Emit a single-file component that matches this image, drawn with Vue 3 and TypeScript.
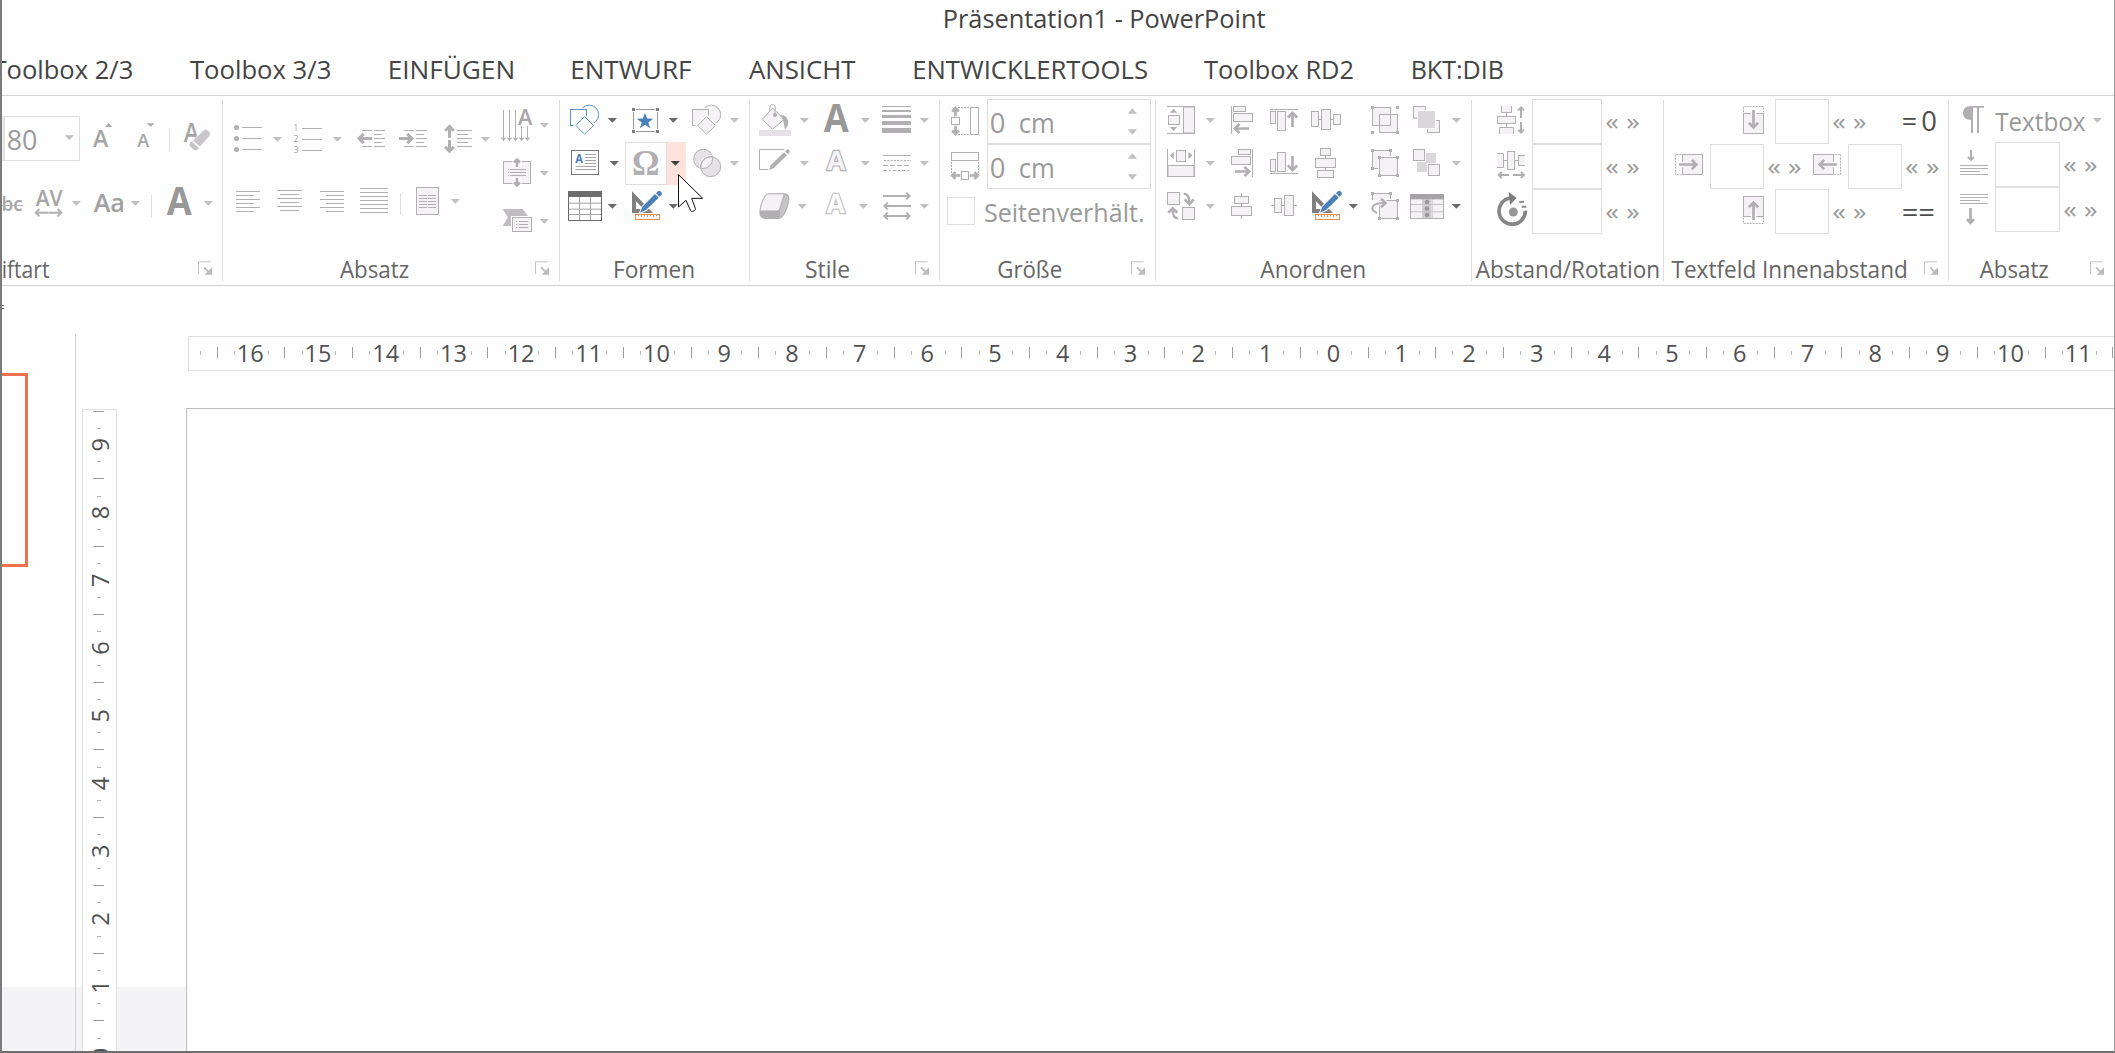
<script setup lang="ts">
// Icon artwork is drawn on a grid of three units per CSS pixel.
type Item = [x: number, art: string, box?: boolean]
interface Row { h: number; items: Item[] }
interface Block { x0: number; x1: number; rows: Row[] }
interface Group { name: string; left: number; right: number; label: [number, number]; launch?: number; blocks: Block[] }

const UNIT = 3
const G = '#b1afb2'
const LIGHT = '#c0bfc1'
const DARK = '#696969'
const BLUE = '#4a80ba'
const PALE = '#f4f2f5'

const bearingL: Record<string, number> = { A: 0, T: 0.02, S: 0.04, F: 0.07, E: 0.07, B: 0.07, P: 0.07, '0': 0.05, '8': 0.05, G: 0.06, c: 0.05, '=': 0.05, '«': 0.04, '»': 0.04 }
const bearingR: Record<string, number> = { A: 0, T: 0.02, V: 0, n: 0.08, N: 0.1, d: 0.09, m: 0.08, F: 0.02, B: 0.05, '0': 0.05, '3': 0.05, '=': 0.05, '.': 0.07, e: 0.05, a: 0.08, '«': 0.04, '»': 0.04 }

function fit(str: string, x1: number, x2: number, size: number) {
  const l = (bearingL[str[0]] ?? 0.04) * size
  const r = (bearingR[str[str.length - 1]] ?? 0.02) * size
  return { x: x1 - l, len: x2 - x1 + l + r }
}
function t(str: string, x1: number, x2: number, y: number, size: number, fill = '#a3a3a3', extra = '') {
  const f = fit(str, x1, x2, size)
  return `<text x="${f.x}" y="${y}" font-size="${size}" textLength="${f.len}" lengthAdjust="spacingAndGlyphs" fill="${fill}" stroke="none" ${extra}>${str}</text>`
}
const dd = (x: number, y: number, c = LIGHT) => `<path d="M${x - 14} ${y - 7}h28l-14 14z" fill="${c}" stroke="none"/>`
const up = (x: number, y: number, c = LIGHT, w = 14, h = 17) => `<path d="M${x - w} ${y + h / 2}h${2 * w}l${-w} ${-h}z" fill="${c}" stroke="none"/>`
const down = (x: number, y: number, c = LIGHT, w = 14, h = 17) => `<path d="M${x - w} ${y - h / 2}h${2 * w}l${-w} ${h}z" fill="${c}" stroke="none"/>`
const p = (d: string, extra = '') => `<path d="${d}" ${extra}/>`
const r = (x1: number, y1: number, x2: number, y2: number, fill = PALE, extra = '') => `<rect x="${x1}" y="${y1}" width="${x2 - x1}" height="${y2 - y1}" fill="${fill}" ${extra}/>`
const solid = (x1: number, y1: number, x2: number, y2: number, fill = G) => r(x1, y1, x2, y2, fill, 'stroke="none"')
const lines = (ys: number[], x1: number, x2: number, short?: [number, number]) =>
  p(ys.map((y, i) => (short && i % 2 ? `M${short[0]} ${y}H${short[1]}` : `M${x1} ${y}H${x2}`)).join(''))
function arrow(x1: number, y1: number, x2: number, y2: number, w = 8, a = 14, c = G) {
  const n = Math.hypot(x2 - x1, y2 - y1)
  const ux = (x2 - x1) / n, uy = (y2 - y1) / n
  const vx = x2 - ux * w * 0.7, vy = y2 - uy * w * 0.7
  const bx = vx - ux * a, by = vy - uy * a
  return p(`M${x1} ${y1}L${vx} ${vy}M${bx - uy * a} ${by + ux * a}L${vx} ${vy}L${bx + uy * a} ${by - ux * a}`, `stroke="${c}" stroke-width="${w}"`)
}
const vsep = (x: number, y1: number, y2: number) => p(`M${x} ${y1}V${y2}`, 'stroke="#dedede"')
const handles = (pts: [number, number][], c = G) => pts.map(([x, y]) => solid(x, y, x + 9, y + 9, c)).join('')
const chev = (x: number, x2: number, cy: number) => t('«', x, x + 35, cy + 20, 71, '#999') + t('»', x2, x2 + 35, cy + 20, 71, '#999')

const shapes = (dx: number, c: string, f: string) =>
  `<g transform="translate(${dx} 0)" stroke="${c}">` +
  `<circle cx="117.5" cy="74" r="28.5" fill="${f}"/>` +
  r(61.5, 58.5, 109.5, 106.5, f, 'stroke="#fefefe" stroke-width="9"') + r(61.5, 58.5, 109.5, 106.5, f) +
  p('M103.500 80L130.500 106.500L103.500 132.500L77.500 106.500Z', 'stroke="#fefefe" stroke-width="11"') +
  p('M103.500 80L130.500 106.500L103.500 132.500L77.500 106.500Z', `fill="${f}"`) + '</g>'

const drafting = (dx: number) =>
  `<g transform="translate(${dx} 0)" stroke="none">` +
  p('M246 304L309 369H246ZM258 334V357H280Z', 'fill="#808080" fill-rule="evenodd"') +
  p('M270 368L277 350L324 303L337 314L288 361Z', 'fill="#fefefe" stroke="#fefefe" stroke-width="5"') +
  p('M270 368L277 350L315 312L326 323L288 360Z', `fill="${BLUE}"`) + p('M318 309L325 303Q329 301 333 305Q337 309 335 314L329 320Z', `fill="${BLUE}"`) +
  r(256.5, 373.5, 328.5, 388.5, '#fefefe', 'stroke="#e8914b"') +
  p('M265.500 375V379M274.500 375V381M283.500 375V379M292.500 375V381M301.500 375V379M310.500 375V381M319.500 375V379', 'stroke="#e8914b"') + '</g>'

const star = (() => {
  let d = ''
  for (let i = 0; i < 10; i++) {
    const rad = i % 2 ? 10.5 : 26
    const a = -Math.PI / 2 + (i * Math.PI) / 5
    d += `${i ? 'L' : 'M'}${(285 + rad * Math.cos(a)).toFixed(1)} ${(94 + rad * Math.sin(a)).toFixed(1)}`
  }
  return p(d + 'Z', `fill="${BLUE}" stroke="none"`)
})()

const halo = 'stroke="#fefefe" stroke-width="9"'

const groups: Group[] = [
  {
    name: 'Schriftart', left: 6, right: 666, label: [-122, 147], launch: 594,
    blocks: [{
      x0: 6, x1: 666,
      rows: [
        { h: 219, items: [
          [6, solid(6, 78, 12, 213, '#e9e9e9') + p('M6 79.500H238.500V211.500H6M13.500 78V213', 'stroke="#dedede"') + t('80', 24, 108, 180, 81, '#9a9a9a') + dd(208, 143)],
          [270, t('A', 279, 325, 172, 70, '#a6a6a6', 'font-weight="600"') + up(326, 105, '#aaa', 11, 12)],
          [405, t('A', 412, 448, 172, 54, '#a6a6a6', 'font-weight="600"') + down(452, 105, '#aaa', 12, 11)],
          [504, vsep(508.5, 117, 183)],
          [540, t('A', 551, 597, 157, 80, '#a6a6a6', 'font-weight="600"') + p('M578 152L612 119Q617 116 622 120L630 127Q634 132 630 137L600 171Z', 'fill="#c8c6c9" stroke="#fefefe"') + p('M570 158L575 154L597 175L591 180Q586 183 581 179L570 169Q566 164 570 158Z', 'fill="#c8c6c9" stroke="none"')],
        ] },
        { h: 186, items: [
          [6, t('abc', -26, 67, 362, 60, '#a6a6a6', 'font-weight="600"') + p('M0 346.500H69')],
          [99, t('AV', 107, 188, 347, 65, '#a6a6a6', 'font-weight="600"') + arrow(146, 368, 188, 368, 6, 11) + arrow(146, 368, 103, 368, 6, 11) + dd(229, 340)],
          [270, t('Aa', 281, 369, 365, 74, '#a0a0a0', 'font-weight="600"') + dd(406, 340)],
          [450, vsep(454.5, 315, 381)],
          [492, t('A', 500, 575, 375, 117, '#989898', 'font-weight="700"') + dd(625, 340)],
        ] },
      ],
    }],
  },
  {
    name: 'Absatz', left: 9, right: 1017, label: [360, 566], launch: 945,
    blocks: [
      { x0: 9, x1: 840, rows: [
        { h: 219, items: [
          [33, [112.5, 145.5, 178.5].map(y => `<circle cx="49.500" cy="${y}" r="7.500" fill="${G}" stroke="none"/>`).join('') + lines([112.5, 145.5, 178.5], 66, 126) + dd(172, 148)],
          [210, t('1', 222, 234, 122, 29) + t('2', 222, 235, 156, 29) + t('3', 222, 235, 189, 29) + lines([115.5, 148.5, 181.5], 246, 306) + dd(352, 148)],
          [405, p('M426 121.500H456M462 121.500H495M462 133.500H486M462 145.500H495M462 157.500H486M426 169.500H456M462 169.500H495') + arrow(456, 145.5, 411, 145.5, 9)],
          [531, p('M552 121.500H582M588 121.500H621M588 133.500H612M588 145.500H621M588 157.500H612M552 169.500H582M588 169.500H621') + arrow(537, 145.5, 582, 145.5, 9)],
          [663, lines([121.5, 133.5, 145.5, 157.5, 169.5], 711, 756, [711, 744]) + arrow(688.5, 143, 688.5, 103, 9, 13) + arrow(688.5, 150, 688.5, 190, 9, 13) + dd(796, 148)],
        ] },
        { h: 186, items: [
          [39, lines([304.5, 316.5, 328.5, 340.5, 352.5, 364.5], 48, 120, [48, 102])],
          [162, lines([301.5, 313.5, 325.5, 337.5, 349.5, 361.5], 171, 246, [180, 237])],
          [291, lines([304.5, 316.5, 328.5, 340.5, 352.5, 364.5], 300, 372, [318, 372])],
          [411, lines([295.5, 307.5, 319.5, 331.5, 343.5, 355.5, 367.5], 420, 504)],
          [537, vsep(541.5, 309, 375)],
          [579, r(589.5, 292.5, 655.5, 373.5) + lines([316.5, 325.5, 334.5, 343.5, 352.5], 597, 621) + lines([316.5, 325.5, 334.5, 343.5, 352.5], 624, 648) + dd(706, 334)],
        ] },
      ] },
      { x0: 840, x1: 1017, rows: [
        { h: 156, items: [[840, p('M850.500 60V151M868.500 60V151M886.500 60V151M904.500 108V151M922.500 108V151') + [850.5, 868.5, 886.5, 904.5, 922.5].map(x => p(`M${x - 6} 143L${x} 150L${x + 6} 143`, 'stroke-width="4"')).join('') + t('A', 894, 937, 104, 66, '#a9a7aa', 'font-weight="600"') + dd(973, 106)]] },
        { h: 144, items: [[840, r(850.5, 214.5, 931.5, 280.5) + solid(877, 210, 905, 232, '#fefefe') + solid(877, 264, 905, 286, '#fefefe') + lines([238.5, 247.5, 256.5], 870, 918) + p('M864 238.500H867M864 247.500H867M864 256.500H867') + arrow(891, 231, 891, 203, 8, 9) + arrow(891, 264, 891, 292, 8, 9) + dd(973, 250)]] },
        { h: 105, items: [[840, p('M848 357H908L924 378V408H848L863 382Z', 'fill="#bfbdc0" stroke="none"') + r(877.5, 382.5, 934.5, 424.5, PALE, halo) + r(877.5, 382.5, 934.5, 424.5) + lines([394.5, 403.5, 412.5], 897, 924) + p('M888 394.500H892M888 403.500H892M888 412.500H892') + dd(973, 394)]] },
      ] },
    ],
  },
  {
    name: 'Formen', left: 30, right: 597, label: [194, 430],
    blocks: [{ x0: 30, x1: 597, rows: [
      { h: 129, items: [
        [54, shapes(0, '#5b93cf', '#fefefe') + dd(187, 91, DARK)],
        [237, p('M258 58.500H315M258 124.500H315M250.500 66V117M322.500 66V117', 'stroke="#9a9a9a"') + handles([[246, 54], [318, 54], [246, 120], [318, 120]], '#7d7d7d') + star + dd(370, 91, DARK)],
        [420, shapes(366, G, PALE) + dd(553, 91)],
      ] },
      { h: 129, items: [
        [54, r(64.5, 181.5, 145.5, 253.5, '#fefefe', 'stroke="#777"') + p('M105 193.500H138M105 202.500H138M105 211.500H138M105 220.500H138M77 229.500H138M77 238.500H138', 'stroke="#a5a5a5"') + t('A', 76, 99, 218, 37, BLUE, 'font-weight="700"') + dd(193, 220, DARK)],
        [225, r(226.5, 157.5, 349.5, 283.5, '#fefefe', 'stroke="#dedede"') + solid(351, 156, 408, 285, '#fde3dc') + t('Ω', 250, 326, 255, 109, G, 'font-weight="700" font-family="Liberation Serif, serif"') + dd(376, 220, '#404040')],
        [420, `<circle cx="460" cy="207" r="29" fill="#e4e2e5"/><circle cx="482" cy="230" r="33" fill="none" stroke="#fefefe"/><circle cx="482" cy="230" r="30" fill="#e4e2e5"/><path d="M487 201A29 29 0 0 1 453 235A30 30 0 0 1 487 201Z" fill="#f2f0f3"/>` + dd(553, 220)],
      ] },
      { h: 129, items: [
        [48, r(55.5, 304.5, 154.5, 391.5, '#fefefe', 'stroke="#696969"') + p('M57 339.500H153M57 357.500H153M57 373.500H153M88.500 321V390M121.500 321V390', 'stroke="#a5a5a5"') + solid(54, 303, 156, 321, '#6c6c6c') + dd(187, 349, DARK)],
        [237, drafting(0) + dd(370, 349, DARK)],
      ] },
    ] }],
  },
  {
    name: 'Stile', left: 30, right: 597, label: [198, 327], launch: 525,
    blocks: [{ x0: 30, x1: 597, rows: [
      { h: 129, items: [
        [51, p('M98 54L132 88L98 118L67 88Z', `fill="${PALE}"`) + p('M89.500 64V51Q89.500 43.500 97.500 43.500Q105.500 43.500 105.500 51V72') + `<circle cx="105" cy="75" r="6" fill="${G}" stroke="none"/>` + p('M122 75Q143 76 145 97Q145 109 135 119Q134 97 122 75Z', `fill="${G}" stroke="none"`) + solid(57, 120, 153, 138, '#e7e2e7') + dd(193, 91)],
        [243, t('A', 251, 326, 126, 117, '#989898', 'font-weight="700"') + dd(376, 91)],
        [420, solid(426, 48, 513, 51) + solid(426, 60, 513, 66) + solid(426, 75, 513, 84) + solid(426, 93, 513, 105) + solid(426, 114, 513, 129) + dd(553, 91)],
      ] },
      { h: 129, items: [
        [51, p('M132 178.500H58.500V238.500H84') + p('M87 240L92 226L132 187L141 196L101 235Z', `fill="${G}" stroke="none"`) + p('M135 184L140 179Q143 176 147 180Q151 184 148 188L144 193Z', `fill="${G}" stroke="none"`) + dd(193, 220)],
        [243, t('A', 261, 316, 239, 82, PALE, `font-weight="700" style="stroke:${G};stroke-width:7;paint-order:stroke"`) + dd(376, 220)],
        [420, p('M429 196.500H513') + p('M432 211.500H513', 'stroke-dasharray="6 4"') + p('M429 226.500H513', 'stroke-dasharray="15 6"') + p('M429 241.500H513', 'stroke-dasharray="12 5 6 5"') + dd(553, 220)],
      ] },
      { h: 129, items: [
        [51, p('M85 310H134Q149 312 148 330L144 349Q138 372 124 384Q118 388 108 387H74Q58 384 58 366Q60 340 72 321Q77 311 85 310Z', `fill="${G}" stroke="none"`) + p('M85 312H132L118 358Q116 362 110 362H61Q62 340 74 321Q78 313 85 312Z', `fill="${PALE}" stroke="#bbb9bc" stroke-width="2"`) + p('M135 314Q147 318 145 334Q140 362 121 384L119 364Z', 'fill="#c6c4c7" stroke="none"') + dd(187, 349)],
        [243, t('A', 260, 314, 370, 82, '#fefefe', `font-weight="700" style="stroke:#c6c4c7;stroke-width:8;paint-order:stroke"`) + dd(370, 349)],
        [420, arrow(429, 318, 513, 318, 6, 10) + arrow(513, 348, 429, 348, 6, 10) + arrow(471, 378, 513, 378, 6, 10) + arrow(471, 378, 429, 378, 6, 10) + dd(553, 349)],
      ] },
    ] }],
  },
  {
    name: 'Größe', left: 15, right: 660, label: [191, 378], launch: 588,
    blocks: [{ x0: 15, x1: 660, rows: [
      { h: 135, items: [
        [45, arrow(61.5, 79, 61.5, 49, 8, 10) + arrow(61.5, 107, 61.5, 137, 8, 10) + r(49.5, 82.5, 73.5, 103.5, '#fefefe') + p('M69 52.500H105M69 133.500H105', 'stroke-dasharray="6 3"') + r(106.5, 52.5, 130.5, 133.5, '#fefefe')],
        [156, t('0', 168, 207, 129, 80, '#9a9a9a') + t('cm', 255, 353, 129, 80, '#9a9a9a') + up(592, 63) + down(592, 126), true],
        [648, ''],
      ] },
      { h: 135, items: [
        [45, r(49.5, 187.5, 130.5, 211.5, '#fefefe') + p('M49.500 216V249M130.500 216V249', 'stroke-dasharray="6 3"') + arrow(76, 256.5, 46, 256.5, 8, 10) + arrow(104, 256.5, 134, 256.5, 8, 10) + r(79.5, 244.5, 100.5, 268.5, '#fefefe')],
        [156, t('0', 168, 207, 264, 80, '#9a9a9a') + t('cm', 255, 353, 264, 80, '#9a9a9a') + up(592, 198) + down(592, 261), true],
        [648, ''],
      ] },
      { h: 135, items: [[36, r(37.5, 322.5, 118.5, 403.5, '#fefefe', 'stroke="#dedede"') + t('Seitenverhält.', 150, 623, 396, 79, '#999')]] },
    ] }],
  },
  {
    name: 'Anordnen', left: 18, right: 963, label: [331, 643],
    blocks: [{ x0: 18, x1: 963, rows: [
      { h: 129, items: [
        [48, p('M51 49.500H135M51 130.500H135') + r(55.5, 76.5, 88.5, 103.5) + up(70.5, 62, G, 11, 12) + down(70.5, 117, G, 11, 12) + r(100.5, 51, 133.5, 129) + dd(181, 91)],
        [240, p('M244.500 48V132') + r(250.5, 49.5, 286.5, 64.5) + r(250.5, 70.5, 307.5, 94.5) + arrow(297, 115.5, 249, 115.5, 8)],
        [357, p('M360 58.500H444') + r(361.5, 64.5, 376.5, 100.5) + r(382.5, 64.5, 406.5, 121.5) + arrow(427.5, 111, 427.5, 63, 8)],
        [480, p('M505 88.500H550') + r(484.5, 64.5, 505.5, 109.5) + r(514.5, 58.5, 541.5, 118.5) + r(550.5, 73.5, 571.5, 103.5)],
        [660, r(667.5, 52.5, 721.5, 106.5) + r(688.5, 73.5, 742.5, 127.5) + p('M688.500 73.500H721.500V106.500H688.500Z') + handles([[663, 48], [738, 48], [663, 123], [738, 123]])],
        [786, r(790.5, 49.5, 826.5, 84.5) + r(832.5, 91.5, 868.5, 127.5) + r(804, 63, 855, 114, '#d9d7da', 'stroke="#fefefe" stroke-width="5" paint-order="stroke"') + dd(919, 91)],
      ] },
      { h: 129, items: [
        [48, p('M52.500 177V261M133.500 177V261') + r(79.5, 181.5, 106.5, 214.5) + p('M71 185V208L60 196.500ZM115 185V208L127 196.500Z', `fill="${G}" stroke="none"`) + r(54, 226.5, 132, 259.5) + dd(181, 220)],
        [240, p('M307.500 177V261') + r(265.5, 178.5, 301.5, 193.5) + r(244.5, 199.5, 301.5, 223.5) + arrow(255, 244.5, 303, 244.5, 8)],
        [357, p('M360 250.500H444') + r(361.5, 208.5, 376.5, 244.5) + r(382.5, 187.5, 406.5, 244.5) + arrow(427.5, 198, 427.5, 246, 8)],
        [480, p('M526.500 196V242') + r(511.5, 175.5, 541.5, 196.5) + r(496.5, 205.5, 556.5, 232.5) + r(502.5, 241.5, 550.5, 262.5)],
        [660, r(667.5, 181.5, 721.5, 235.5) + handles([[663, 177], [717, 177], [663, 231]]) + r(688.5, 202.5, 742.5, 256.5, PALE, halo) + r(688.5, 202.5, 742.5, 256.5) + handles([[684, 198], [738, 198], [684, 252], [738, 252]])],
        [786, r(790.5, 178.5, 823.5, 211.5) + solid(828, 189, 858, 219, '#d9d7da') + solid(801, 216, 831, 246, '#d9d7da') + r(835.5, 223.5, 868.5, 256.5, PALE, halo) + r(835.5, 223.5, 868.5, 256.5) + dd(919, 220)],
      ] },
      { h: 129, items: [
        [48, r(52.5, 307.5, 88.5, 343.5) + r(97.5, 352.5, 133.5, 388.5) + p('M101 311Q119 312 118 341', 'stroke-width="7"') + p('M104 328L118 342L131 328', 'stroke-width="8"') + p('M84 385Q67 384 68 356', 'stroke-width="7"') + p('M55 368L68 355L82 368', 'stroke-width="8"') + dd(181, 349)],
        [240, p('M274.500 309V387') + r(253.5, 319.5, 295.5, 340.5) + r(244.5, 349.5, 304.5, 376.5)],
        [357, p('M363 346.500H441') + r(373.5, 325.5, 394.5, 367.5) + r(403.5, 316.5, 430.5, 376.5)],
        [480, drafting(240) + dd(610, 349, DARK)],
        [660, r(667.5, 310.5, 721.5, 364.5) + solid(660, 330, 690, 372, '#fefefe') + handles([[663, 306], [717, 306]]) + r(688.5, 331.5, 742.5, 385.5, PALE, halo) + r(688.5, 331.5, 742.5, 385.5) + handles([[738, 327], [684, 381], [738, 381]]) + p('M681 370Q664 362 668 350Q674 338 704 339', 'stroke="#fefefe" stroke-width="13"') + p('M693 325L707 339L693 353', 'stroke="#fefefe" stroke-width="14"') + p('M681 369Q664 362 668 350Q674 338 706 339', 'stroke-width="6"') + p('M693 326L707 339L693 352', 'stroke-width="8"')],
        [780, r(781.5, 313.5, 880.5, 385.5, PALE) + solid(819, 328, 843, 384, '#cfcdd0') + p('M783 343.500H879M783 365.500H879M818.500 328V384M846.500 328V384', 'stroke="#c4c2c5"') + solid(780, 312, 882, 328, '#a5a3a6') + [336, 356, 375].map(y => `<circle cx="831" cy="${y}" r="7" fill="#999" stroke="none"/>`).join('') + dd(919, 349, DARK)],
      ] },
    ] }],
  },
  {
    name: 'Abstand/Rotation', left: 21, right: 594, label: [32, 580],
    blocks: [{ x0: 21, x1: 594, rows: [
      { h: 135, items: [
        [90, p('M109.500 48V67.500H139.500V48', `fill="${PALE}"`) + p('M103.500 132V112.500H145.500V132', `fill="${PALE}"`) + p('M124.500 67V112') + r(97.5, 79.5, 151.5, 100.5) + arrow(168, 84, 168, 48, 6, 9) + arrow(168, 96, 168, 132, 6, 9)],
        [201, '', true], [411, chev(424, 487, 100)],
      ] },
      { h: 135, items: [
        [90, p('M96 190.500H115.500V232.500H96', `fill="${PALE}"`) + p('M180 196.500H160.500V226.500H180', `fill="${PALE}"`) + p('M115 211.500H160') + r(127.5, 184.5, 148.5, 238.5) + arrow(132, 255, 97, 255, 6, 9) + arrow(144, 255, 181, 255, 6, 9)],
        [201, '', true], [411, chev(424, 487, 235)],
      ] },
      { h: 135, items: [
        [90, p('M136 324A39.500 39.500 0 1 0 181 362', 'style="stroke:#868686;stroke-width:11"') + p('M131 306L155 324L135 344Z', 'fill="#7c7c7c" stroke="none"') + p('M163 336L177 335M170 350L184 350', 'style="stroke:#8d8d8d;stroke-width:6"') + '<circle cx="145" cy="366" r="13.500" fill="#979797" stroke="none"/>'],
        [201, '', true], [411, chev(424, 487, 370)],
      ] },
    ] }],
  },
  {
    name: 'Textfeld Innenabstand', left: 597, right: 1449, label: [621, 1322], launch: 1377,
    blocks: [{ x0: 597, x1: 1449, rows: [
      { h: 135, items: [
        [828, r(835.5, 70.5, 895.5, 130.5) + p('M835.500 67V49.500H895.500V67', 'stroke-dasharray="6 3"') + p('M865.500 60V76', 'stroke="#fefefe" stroke-width="16"') + arrow(865.5, 60, 865.5, 118, 8, 14)],
        [930, '', true], [1092, chev(1105, 1167, 100)],
        [1302, t('=', 1314, 1352, 124, 80, '#4d4d4d') + t('0', 1373, 1412, 122, 80, '#4d4d4d')],
      ] },
      { h: 135, items: [
        [627, r(652.5, 193.5, 712.5, 253.5) + p('M649 193.500H631.500V253.500H649', 'stroke-dasharray="6 3"') + p('M642 223.500H658', 'stroke="#fefefe" stroke-width="16"') + arrow(642, 223.5, 700, 223.5, 8, 14)],
        [735, '', true], [897, chev(910, 972, 235)],
        [1041, r(1045.5, 193.5, 1105.5, 253.5) + p('M1109 193.500H1126.500V253.500H1109', 'stroke-dasharray="6 3"') + p('M1116 223.500H1100', 'stroke="#fefefe" stroke-width="16"') + arrow(1116, 223.5, 1058, 223.5, 8, 14)],
        [1149, '', true], [1311, chev(1323, 1386, 235)],
      ] },
      { h: 135, items: [
        [828, r(835.5, 319.5, 895.5, 379.5) + p('M835.500 383V400.500H895.500V383', 'stroke-dasharray="6 3"') + p('M865.500 390V374', 'stroke="#fefefe" stroke-width="16"') + arrow(865.5, 390, 865.5, 332, 8, 14)],
        [930, '', true], [1092, chev(1105, 1167, 370)],
        [1302, t('==', 1314, 1406, 395, 80, '#4d4d4d')],
      ] },
    ] }],
  },
  {
    name: 'Absatz', left: 492, right: 987, label: [584, 790], launch: 915,
    blocks: [{ x0: 492, x1: 987, rows: [
      { h: 129, items: [[525, p('M558 90Q534 90 534 69Q534 48 558 48H597V53H582V129H576V53H564V129H558Z', `fill="${G}" stroke="none"`) + t('Textbox', 632, 900, 123, 79, '#999') + dd(937, 91)]] },
      { h: 135, items: [
        [525, arrow(558, 180, 558, 214, 6, 9) + p('M525 226.500H609M525 235.500H609M525 244.500H585M525 253.500H609')],
        [630, '', true], [825, chev(838, 900, 229)],
      ] },
      { h: 135, items: [
        [525, p('M525 313.500H609M525 322.500H609M525 331.500H585M525 340.500H609') + arrow(556.5, 354, 556.5, 404, 8, 11)],
        [630, '', true], [825, chev(838, 900, 364)],
      ] },
    ] }],
  },
]

function rowTop(b: Block, i: number) {
  return b.rows.slice(0, i).reduce((s, q) => s + q.h, 27)
}
function itemWidth(b: Block, items: Item[], i: number) {
  return (i + 1 < items.length ? items[i + 1][0] : b.x1) - items[i][0]
}
function view(b: Block, ri: number, ii: number) {
  const row = b.rows[ri]
  return `${row.items[ii][0]} ${rowTop(b, ri)} ${itemWidth(b, row.items, ii)} ${row.h}`
}
function labelArt(g: Group) {
  let s = t(g.name, g.label[0], g.label[1], 564, 71, '#666')
  if (g.launch !== undefined) {
    const x = g.launch
    s += p(`M${x + 38} 515.500H${x + 1.5}V552`, 'stroke="#c3c2c4"') + p(`M${x + 18} 532L${x + 31} 545`, 'stroke="#bbb9bc" stroke-width="5"') + p(`M${x + 42} 532V554H${x + 20}Z`, 'fill="#bbb9bc" stroke="none"')
  }
  return s
}

// Tab strip: start, visible glyph range (CSS pixels)
const tabs = [
  { name: 'Toolbox 2/3', x1: -7, x2: 132 },
  { name: 'Toolbox 3/3', x1: 190.5, x2: 330 },
  { name: 'EINFÜGEN', x1: 389.5, x2: 512.5 },
  { name: 'ENTWURF', x1: 572, x2: 691 },
  { name: 'ANSICHT', x1: 749, x2: 855 },
  { name: 'ENTWICKLERTOOLS', x1: 914, x2: 1147.5 },
  { name: 'Toolbox RD2', x1: 1204.5, x2: 1353.5 },
  { name: 'BKT:DIB', x1: 1412.5, x2: 1502.5 },
].map((tab, i, all) => {
  const start = i ? Math.round(tab.x1) - 10 : 2
  const end = i + 1 < all.length ? Math.round(all[i + 1].x1) - 10 : 1530
  return { ...tab, start, w: end - start, f: fit(tab.name, tab.x1, tab.x2, 26) }
})
const title = fit('Präsentation1 - PowerPoint', 944.5, 1265, 25)

const PITCH = 67.7
const hMarks = Array.from({ length: 29 }, (_, i) => ({ n: Math.abs(i - 17), x: 1334 + (i - 17) * PITCH }))
const vMarks = Array.from({ length: 11 }, (_, i) => ({ n: 10 - i, y: 444.9 + (i - 1) * 67.74 }))
const snap = (v: number) => Math.floor(v) + 0.5
</script>

<template>
  <div class="window">
    <header class="titlebar">
      <svg width="2112" height="38" viewBox="2 0 2112 38"><text :x="title.x" y="27.5" font-size="25" :textLength="title.len" lengthAdjust="spacingAndGlyphs">Präsentation1 - PowerPoint</text></svg>
    </header>
    <nav class="tabs">
      <svg v-for="tab in tabs" :key="tab.name" :width="tab.w" height="57" :viewBox="`${tab.start} 38 ${tab.w} 57`">
        <text :x="tab.f.x" y="79" font-size="26" :textLength="tab.f.len" lengthAdjust="spacingAndGlyphs">{{ tab.name }}</text>
      </svg>
    </nav>
    <section class="ribbon">
      <template v-for="(g, gi) in groups" :key="gi">
        <div class="group" :style="{ width: (g.right - g.left) / UNIT + 'px' }">
          <div class="blocks">
            <div v-for="(b, bi) in g.blocks" :key="bi" class="block" :style="{ width: (b.x1 - b.x0) / UNIT + 'px' }">
              <div v-for="(row, ri) in b.rows" :key="ri" class="row" :style="{ height: row.h / UNIT + 'px', paddingLeft: (row.items[0][0] - b.x0) / UNIT + 'px' }">
                <div v-for="(it, ii) in row.items" :key="ii" :class="it[2] ? 'field' : 'tool'" :style="{ width: itemWidth(b, row.items, ii) / UNIT + 'px' }">
                  <svg v-if="it[1]" class="art" :width="itemWidth(b, row.items, ii) / UNIT" :height="row.h / UNIT" :viewBox="view(b, ri, ii)" v-html="it[1]" />
                </div>
              </div>
            </div>
          </div>
          <svg class="art" :width="(g.right - g.left) / UNIT" height="44" :viewBox="`${g.left} 450 ${g.right - g.left} 132`" v-html="labelArt(g)" />
        </div>
        <i v-if="gi < groups.length - 1" class="sep" />
      </template>
      <svg class="pointer" width="27" height="40" viewBox="384 252 81 120">
        <path d="M385.500 254V351L408 331L422 362Q424 366 428 364L434 361Q438 359 436 355L425 325H458Z" fill="#fff" stroke="#111" stroke-width="3" />
      </svg>
    </section>
    <main class="work">
      <aside class="thumbs">
        <div class="mark" />
        <div class="thumb" />
      </aside>
      <div class="editor">
        <svg class="hruler" width="1926" height="35" viewBox="188 336 1926 35">
          <rect x="188.500" y="336.500" width="1940" height="34" />
          <template v-for="(m, i) in hMarks" :key="i">
            <path v-if="i > 0" :d="`M${snap(m.x - 16.5)} 351V355`" class="minor" />
            <path :d="`M${snap(m.x + 17.3)} 351V355`" class="minor" />
            <path :d="`M${snap(m.x + 34)} 347V358`" class="major" />
            <text v-if="i > 0" :x="m.x - 0.5" y="362" text-anchor="middle" font-size="23.500">{{ m.n }}</text>
          </template>
        </svg>
        <div class="stage">
          <svg class="vruler" width="35" height="642" viewBox="82 409 35 642">
            <rect x="82.500" y="409.500" width="34" height="700" />
            <template v-for="(m, i) in vMarks" :key="i">
              <path v-if="i > 0" :d="`M97 ${snap(m.y - 16.5)}H101`" class="minor" />
              <path v-if="i > 0" :d="`M97 ${snap(m.y + 17)}H101`" class="minor" />
              <path :d="`M93 ${snap(m.y + 34)}H104`" class="major" />
              <text v-if="i > 0" :transform="`translate(109 ${m.y}) rotate(-90)`" text-anchor="middle" font-size="23.500">{{ m.n }}</text>
            </template>
          </svg>
          <div class="slide" />
        </div>
      </div>
    </main>
  </div>
</template>

<style>
body { margin: 0; background: #fefefe; }
</style>

<style scoped>
.window {
  box-sizing: border-box;
  width: 2115px;
  height: 1053px;
  overflow: hidden;
  background: #fefefe;
  border-left: 2px solid #7b7b7c;
  border-right: 1px solid #9c9c9c;
  border-bottom: 2px solid #6f6f70;
  font-family: "Open Sans", "Noto Sans", sans-serif;
  display: flex;
  flex-direction: column;
}
svg { display: block; flex: none; }
.titlebar { height: 38px; fill: #444; }
.tabs { height: 57px; display: flex; fill: #444; }
.ribbon {
  position: relative;
  box-sizing: border-box;
  height: 191px;
  flex: none;
  display: flex;
  border-top: 1px solid #d3d3d3;
  border-bottom: 1px solid #d3d3d3;
}
.group { flex: none; padding-top: 3px; overflow: hidden; }
.blocks { display: flex; height: 141px; }
.block { flex: none; }
.row { display: flex; box-sizing: border-box; }
.tool, .field { flex: none; box-sizing: border-box; height: 100%; }
.field { border: 1px solid #dedede; }
.field svg { margin: -1px; }
.art { overflow: visible; fill: none; stroke: #b1afb2; stroke-width: 3; }
.sep { flex: none; width: 1px; height: 181px; margin-top: 4px; background: #dedede; }
.pointer { position: absolute; left: 676px; top: 78px; }
.work {
  flex: 1;
  display: flex;
  background: linear-gradient(#fefefe 701px, #f4f3f6 701px);
}
.thumbs { width: 73px; padding-top: 19px; }
.mark { width: 2px; height: 2px; border-top: 1px solid #555; border-bottom: 1px solid #555; }
.thumb { box-sizing: border-box; width: 26px; height: 194px; margin-top: 64px; border: 3px solid #ef7150; border-left: 0; background: #fefefe; }
.editor {
  flex: 1;
  margin-top: 48px;
  border-left: 1px solid #cfcfcf;
  padding-top: 2px;
}
.hruler { margin-left: 112px; }
.stage { display: flex; margin-top: 37px; height: 643px; }
.vruler { margin: 1px 0 0 6px; }
.hruler rect, .vruler rect { fill: #fefefe; stroke: #dedede; }
.hruler text, .vruler text { fill: #505050; }
.minor { stroke: #b5b5b5; }
.major { stroke: #9a9a9a; }
.slide { flex: 1; margin-left: 69px; border-left: 1px solid #bdbdbd; border-top: 1px solid #bdbdbd; background: #fefefe; }
</style>
